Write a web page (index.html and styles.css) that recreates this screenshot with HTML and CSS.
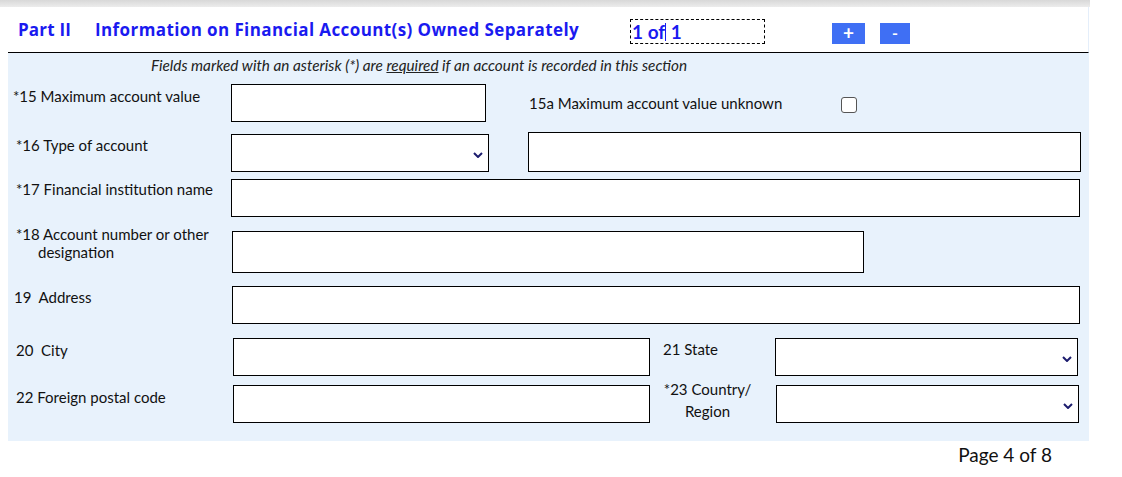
FILE: index.html
```html
<!DOCTYPE html>
<html>
<head>
<meta charset="utf-8">
<link rel="stylesheet" href="styles.css">
</head>
<body>
<div class="page">
  <div class="topbar"></div>
  <div class="header">
    <span class="part">Part II</span>
    <span class="title">Information on Financial Account(s) Owned Separately</span>
    <span class="counter">1 of<span class="caret"></span> 1</span>
    <span class="btn plus">+</span>
    <span class="btn minus">-</span>
  </div>
  <div class="panel">
    <div class="note">Fields marked with an asterisk (*) are <u>required</u> if an account is recorded in this section</div>

    <div class="row r15">
      <div class="label l15">*15 Maximum account value</div>
      <div class="box b15"></div>
      <div class="label l15a">15a Maximum account value unknown</div>
      <div class="check"></div>
    </div>

    <div class="row r16">
      <div class="label l16">*16 Type of account</div>
      <div class="box b16 select"><svg class="chev" viewBox="0 0 10 6" width="10" height="6"><path d="M1 1 L5 5 L9 1" fill="none" stroke="#1c1c6e" stroke-width="2"/></svg></div>
      <div class="box b16b"></div>
    </div>

    <div class="row r17">
      <div class="label l17">*17 Financial institution name</div>
      <div class="box b17"></div>
    </div>

    <div class="row r18">
      <div class="label l18">*18 Account number or other<br><span class="indent">designation</span></div>
      <div class="box b18"></div>
    </div>

    <div class="row r19">
      <div class="label l19">19&nbsp; Address</div>
      <div class="box b19"></div>
    </div>

    <div class="row r20">
      <div class="label l20">20&nbsp; City</div>
      <div class="box b20"></div>
      <div class="label l21">21 State</div>
      <div class="box b21 select"><svg class="chev" viewBox="0 0 10 6" width="10" height="6"><path d="M1 1 L5 5 L9 1" fill="none" stroke="#1c1c6e" stroke-width="2"/></svg></div>
    </div>

    <div class="row r22">
      <div class="label l22">22 Foreign postal code</div>
      <div class="box b22"></div>
      <div class="label l23">*23 Country/<br>Region</div>
      <div class="box b23 select"><svg class="chev" viewBox="0 0 10 6" width="10" height="6"><path d="M1 1 L5 5 L9 1" fill="none" stroke="#1c1c6e" stroke-width="2"/></svg></div>
    </div>
  </div>
  <div class="footer">Page 4 of 8</div>
</div>
</body>
</html>
```

FILE: styles.css
```css
html, body {
  margin: 0;
  padding: 0;
  background: #ffffff;
}
body {
  font-family: Lato, "Open Sans", sans-serif;
  color: #111;
}
.page {
  margin-left: 8px;
  width: 1081px;
}
.topbar {
  height: 7px;
  margin-left: -8px;
  width: 1090px;
  background: linear-gradient(#d8d8d8, #ececec);
}
.header {
  height: 45px;
  display: flex;
  align-items: flex-start;
  border-bottom: 1px solid #000;
  border-right: 1px solid #e4eefa;
}
.part {
  margin-left: 10px;
  margin-top: 11px;
  font-family: "Open Sans", Lato, sans-serif;
  font-weight: bold;
  font-size: 17px;
  letter-spacing: 0.2px;
  color: #1a1af0;
  width: 77px;
}
.title {
  margin-top: 11px;
  font-family: "Open Sans", Lato, sans-serif;
  font-weight: bold;
  font-size: 17px;
  letter-spacing: 0.4px;
  color: #1a1af0;
  width: 535px;
  white-space: nowrap;
}
.counter {
  margin-top: 12px;
  width: 135px;
  height: 25px;
  border: 1px dashed #000;
  font-weight: bold;
  font-size: 19px;
  color: #1a1af0;
  line-height: 23px;
  padding-left: 1px;
  box-sizing: border-box;
}
.caret {
  display: inline-block;
  width: 1px;
  height: 18px;
  background: #1a1af0;
  vertical-align: -2px;
}
.btn {
  margin-top: 16px;
  width: 33px;
  height: 21px;
  background: #3f6ff4;
  color: #fff;
  font-size: 19px;
  line-height: 20px;
  text-align: center;
  font-weight: bold;
}
.plus {
  margin-left: 67px;
}
.minus {
  margin-left: 15px;
  width: 30px;
  font-size: 16px;
}
.panel {
  background: #e8f2fc;
  height: 388px;
  padding-top: 1px;
  box-sizing: border-box;
}
.note {
  font-style: italic;
  font-size: 15.3px;
  color: #222;
  margin-left: 143px;
  margin-top: 2px;
  height: 22px;
}
.row {
  display: flex;
  align-items: flex-start;
}
.label {
  font-size: 15px;
  color: #111;
  line-height: 18px;
  white-space: nowrap;
}
.box {
  background: #fff;
  border: 1px solid #000;
  box-sizing: border-box;
  height: 38px;
}
.select {
  display: flex;
  align-items: center;
  justify-content: flex-end;
  padding-right: 5px;
}
.chev {
  margin-top: 3px;
}
.check {
  width: 16px;
  height: 16px;
  border: 1px solid #555;
  border-radius: 3px;
  background: #fff;
  box-sizing: border-box;
  margin-top: 13px;
}

.r15 { height: 49px; margin-top: 6px; }
.l15 { margin-left: 5px; width: 218px; margin-top: 3px; }
.b15 { width: 255px; }
.l15a { margin-left: 43px; width: 312px; margin-top: 10px; }

.r16 { height: 46px; }
.l16 { margin-left: 8px; width: 215px; margin-top: 3px; }
.b16 { width: 258px; margin-top: 1px; }
.b16b { width: 553px; margin-left: 39px; margin-top: -1px; height: 40px; }

.r17 { height: 52px; }
.l17 { margin-left: 8px; width: 215px; margin-top: 1px; }
.b17 { width: 849px; }

.r18 { height: 55px; }
.l18 { margin-left: 8px; width: 216px; margin-top: -6px; }
.indent { padding-left: 22px; }
.b18 { width: 632px; height: 42px; }

.r19 { height: 52px; }
.l19 { margin-left: 6px; width: 218px; margin-top: 2px; }
.b19 { width: 848px; }

.r20 { height: 47px; }
.l20 { margin-left: 8px; width: 217px; margin-top: 3px; }
.b20 { width: 417px; }
.l21 { margin-left: 13px; width: 112px; margin-top: 2px; }
.b21 { width: 303px; }

.l22 { margin-left: 8px; width: 217px; margin-top: 3px; }
.b22 { width: 417px; }
.l23 { margin-left: 11px; margin-top: -7px; text-align: center; line-height: 22px; width: 93px; margin-right: 22px; }
.b23 { width: 303px; }

.footer {
  text-align: right;
  font-size: 19px;
  color: #111;
  margin-top: 2px;
  padding-right: 37px;
}
```
